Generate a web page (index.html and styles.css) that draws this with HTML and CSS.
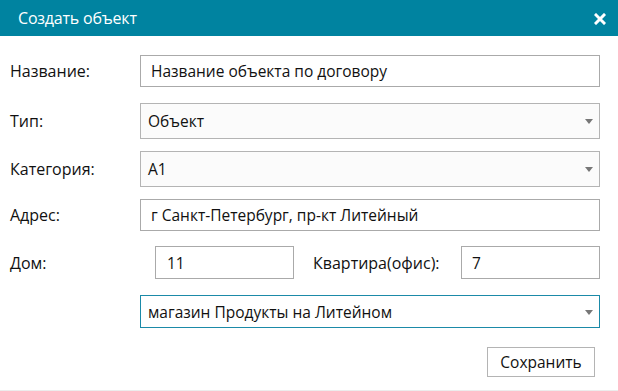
FILE: index.html
```html
<!DOCTYPE html>
<html lang="ru">
<head>
<meta charset="utf-8">
<title>Создать объект</title>
<link rel="stylesheet" href="styles.css">
</head>
<body>
<div class="dialog">
  <div class="header">
    <span class="title">Создать объект</span>
    <span class="close" aria-label="Закрыть">
      <svg width="12" height="12" viewBox="0 0 12 12"><path d="M2 2 L10 10 M10 2 L2 10" stroke="#fff" stroke-width="3" stroke-linecap="square"/></svg>
    </span>
  </div>
  <div class="body">
    <div class="row r1">
      <label class="label">Название:</label>
      <div class="field input">Название объекта по договору</div>
    </div>
    <div class="row r2">
      <label class="label">Тип:</label>
      <div class="field select">Объект<span class="arrow"></span></div>
    </div>
    <div class="row r3">
      <label class="label">Категория:</label>
      <div class="field select">A1<span class="arrow"></span></div>
    </div>
    <div class="row r4">
      <label class="label">Адрес:</label>
      <div class="field input">г Санкт-Петербург, пр-кт Литейный</div>
    </div>
    <div class="row r5">
      <label class="label">Дом:</label>
      <div class="house">
        <div class="field input short">11</div>
        <label class="label2">Квартира(офис):</label>
        <div class="field input flat">7</div>
      </div>
    </div>
    <div class="row r6">
      <span class="label"></span>
      <div class="field select focus">магазин Продукты на Литейном<span class="arrow"></span></div>
    </div>
    <div class="actions">
      <button class="btn">Сохранить</button>
    </div>
  </div>
</div>
</body>
</html>
```

FILE: styles.css
```css
html, body {
  margin: 0;
  padding: 0;
  background: #fff;
}
body {
  font-family: "Open Sans", "Noto Sans", sans-serif;
  font-size: 15.5px;
  color: #111;
}
.dialog {
  width: 618px;
  height: 391px;
  box-sizing: border-box;
  border-bottom: 1px solid #ececec;
}
.header {
  height: 36px;
  background: #0083a0;
  display: flex;
  align-items: center;
  justify-content: space-between;
  padding: 0 12px 0 18px;
}
.title {
  color: #fff;
  font-size: 16px;
  letter-spacing: -0.2px;
}
.close {
  display: flex;
  width: 12px;
  height: 12px;
  margin-top: 1px;
}
.body {
  padding: 0 18px 0 10px;
  display: flex;
  flex-direction: column;
}
.row {
  display: flex;
  align-items: center;
}
.label {
  width: 130px;
  flex: none;
  font-size: 16px;
}
.field {
  flex: 1;
  box-sizing: border-box;
  border: 1px solid #aaaaaa;
  display: flex;
  align-items: center;
  padding-left: 8px;
  background: #fff;
  position: relative;
}
.input { height: 32px; padding-left: 10px; }
.select {
  height: 36px;
  background: #fbfbfb;
  border-color: #b4b4b4;
  padding-left: 7px;
}
.select.focus {
  height: 33px;
  background: #fff;
  border-color: #1b8aa8;
}
.arrow {
  position: absolute;
  right: 6px;
  top: 50%;
  margin-top: -2px;
  width: 0;
  height: 0;
  border-left: 4px solid transparent;
  border-right: 4px solid transparent;
  border-top: 5px solid #777;
}
.r1 { margin-top: 19px; }
.r2 { margin-top: 16px; }
.r3 { margin-top: 12px; }
.r4 { margin-top: 12px; }
.r5 { margin-top: 15px; }
.r6 { margin-top: 16px; }
.house {
  flex: 1;
  display: flex;
  align-items: center;
  margin-left: 15px;
}
.short {
  flex: none;
  width: 139px;
  height: 33px;
  padding-left: 11px;
}
.label2 {
  margin-left: 19px;
  width: 148px;
  flex: none;
  font-size: 16px;
}
.flat {
  height: 33px;
  padding-left: 10px;
}
.actions {
  display: flex;
  justify-content: flex-end;
  margin-top: 19px;
  padding-right: 5px;
}
.btn {
  width: 108px;
  height: 30px;
  background: #fff;
  border: 1px solid #b4b4b4;
  font-family: "Open Sans", "Noto Sans", sans-serif;
  font-size: 15.5px;
  color: #111;
  padding: 0;
}
```
